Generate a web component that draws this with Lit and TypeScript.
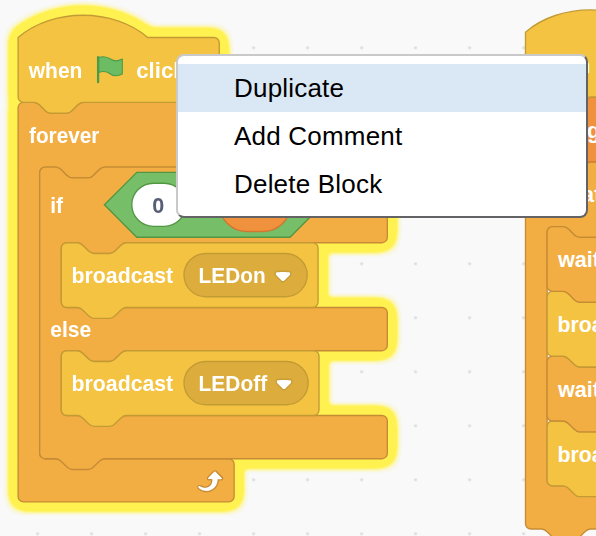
import { LitElement, html, svg, css } from "lit";
import { customElement, state } from "lit/decorators.js";
import { classMap } from "lit/directives/class-map.js";

const UNIT = 1.35;

// Connector traced left-to-right and right-to-left, 36 units wide and 8 deep.
const NOTCH = "c2,0 3,1 4,2 l4,4 c1,1 2,2 4,2 h12 c2,0 3,-1 4,-2 l4,-4 c1,-1 2,-2 4,-2";
const NOTCH_BACK = "c-2,0 -3,1 -4,2 l-4,4 c-1,1 -2,2 -4,2 h-12 c-2,0 -3,-1 -4,-2 l-4,-4 c-1,-1 -2,-2 -4,-2";

const footer = `H48 ${NOTCH_BACK} H4 a4,4 0 0 1 -4,-4 z`;
const header = (w: number, h: number) =>
  `M0,4 a4,4 0 0 1 4,-4 h8 ${NOTCH} H${w - 4} a4,4 0 0 1 4,4 v${h - 8} a4,4 0 0 1 -4,4`;
const mouth = (h: number) =>
  `H64 ${NOTCH_BACK} h-8 a4,4 0 0 0 -4,4 v${h - 8} a4,4 0 0 0 4,4`;
const arm = (w: number, h: number) => `H${w - 4} a4,4 0 0 1 4,4 v${h - 8} a4,4 0 0 1 -4,4`;

const hatPath = (w: number) =>
  `M0,0 c25,-22 71,-22 96,0 H${w - 4} a4,4 0 0 1 4,4 v40 a4,4 0 0 1 -4,4 ${footer}`;
const stackPath = (w: number) => `${header(w, 48)} ${footer}`;
const loopPath = (w: number, inner: number, armW: number, end: string) =>
  `${header(w, 48)} ${mouth(inner)} ${arm(armW, 32)} ${end}`;
const ifElsePath = (w: number) =>
  `${header(w, 56)} ${mouth(48)} ${arm(w, 32)} ${mouth(48)} ${arm(w, 32)} ${footer}`;

const shape = (kind: string, x: number, y: number, d: string) =>
  svg`<path class=${kind} transform="translate(${x} ${y}) scale(${UNIT})" d=${d}></path>`;

const label = (text: string, x: number, y: number, length: number) =>
  svg`<text class="label" x=${x} y=${y} textLength=${length} lengthAdjust="spacingAndGlyphs">${text}</text>`;

const caret = (x: number, y: number) => svg`
  <g transform="translate(${x} ${y}) scale(${UNIT})">
    <path class="caret-edge" d="M12.71,2.44A2.41,2.41,0,0,1,12,4.16L8.08,8.08a2.45,2.45,0,0,1-3.45,0L0.72,4.16A2.42,2.42,0,0,1,0,2.44,2.48,2.48,0,0,1,.71.71C1,0.47,1.43,0,6.36,0S11.75,0.46,12,.71A2.44,2.44,0,0,1,12.71,2.44Z"></path>
    <path class="white" d="M6.36,7.79a1.43,1.43,0,0,1-1-.42L1.42,3.45a1.44,1.44,0,0,1,0-2c0.56-.56,9.31-0.56,9.87,0a1.44,1.44,0,0,1,0,2L7.37,7.37A1.43,1.43,0,0,1,6.36,7.79Z"></path>
  </g>`;

const broadcast = (y: number, w: number, message: string, messageLength: number, fieldWidth: number, caretX: number) => svg`
  ${shape("event", 61.3, y, stackPath(w))}
  ${label("broadcast", 71.6, y + 40.6, 101.6)}
  <rect class="field" x="184" y=${y + 10.8} width=${fieldWidth} height="43.2" rx="21.6"></rect>
  ${label(message, 198.6, y + 40.6, messageLength)}
  ${caret(caretX, y + 27.9)}`;

@customElement("context-menu")
class ContextMenu extends LitElement {
  @state() private active = 0;

  private items = ["Duplicate", "Add Comment", "Delete Block"];

  static styles = css`
    :host {
      display: flex;
      flex-direction: column;
      box-sizing: border-box;
      padding: 8px 0;
      background: #fff;
      border: 2px solid;
      border-color: #c9c9c9 #636366 #636366 #c9c9c9;
      border-radius: 8px;
      font: 26px/48px "Liberation Sans", Arial, sans-serif;
      letter-spacing: 0.2px;
      color: #000;
    }
    .item {
      height: 48px;
      padding-left: 56px;
      white-space: nowrap;
      cursor: default;
    }
    .active {
      background: #dae7f4;
    }
  `;

  render() {
    return this.items.map(
      (item, i) => html`<div
        class=${classMap({ item: true, active: i === this.active })}
        @mouseenter=${() => (this.active = i)}
      >${item}</div>`
    );
  }
}

@customElement("app-root")
class AppRoot extends LitElement {
  static styles = css`
    :host {
      display: block;
      position: relative;
      width: 596px;
      height: 536px;
      overflow: hidden;
      background: #f9f9f9;
    }
    .canvas {
      display: block;
    }
    context-menu {
      position: absolute;
      left: 176px;
      top: 54px;
      width: 412px;
      height: 164px;
    }
    .dot { fill: #dadada; }
    .event { fill: #f4c342; stroke: #c39b35; }
    .control { fill: #f3ae43; stroke: #c68c35; }
    .data { fill: #f0913e; stroke: #cf7730; }
    .operator { fill: #77be68; stroke: #529643; }
    .field { fill: #dcad3c; stroke: #c39b35; stroke-width: 1.35px; }
    .slot { fill: #fff; stroke: #529643; stroke-width: 1.35px; }
    .pill, .hex { stroke-width: 1.35px; }
    .caret-edge { fill: #231f20; opacity: 0.1; }
    .white { fill: #fff; }
    .arrow-edge { fill: #c68c35; }
    .flag { fill: #6bbc63; stroke: #4f9a49; stroke-width: 1.1px; stroke-linejoin: round; }
    .pole { stroke: #4f9a49; stroke-width: 2.3px; stroke-linecap: round; }
    .label {
      font: bold 21.6px "Liberation Sans", Arial, sans-serif;
      fill: #fff;
    }
    .number {
      font: bold 21.6px "Liberation Sans", Arial, sans-serif;
      fill: #575e75;
    }
  `;

  private activeStack() {
    return svg`
      <g filter="url(#glow)">
        ${shape("control", 18.1, 102.3, loopPath(160, 216, 160, "H4 a4,4 0 0 1 -4,-4 z"))}
        ${shape("event", 18.1, 37.5, hatPath(149))}
        ${label("when", 28.8, 78, 53.6)}
        <path class="flag" d="M98.6 57.5C104 55.8 108 57.3 111 59.3C114 61.5 118 61.3 122.3 59.1V74C117.5 76.6 113.5 76.2 110 73.7C106.5 71.2 102.5 71 98.6 72.6Z"></path>
        <path class="pole" d="M98.1 57.2V82.2"></path>
        ${label("clicked", 136.3, 78, 75)}
        ${label("forever", 29, 143.2, 70.4)}
        ${shape("control", 39.7, 167.1, ifElsePath(257.5))}
        ${label("if", 50.2, 212.8, 12.8)}
        <path class="operator hex" d="M136.8 172.3H290L322.4 204.7L290 237.2H136.8L104.4 204.7Z"></path>
        <rect class="slot" x="131.8" y="183.2" width="54" height="43.2" rx="21.6"></rect>
        <text class="number" x="152.2" y="213">0</text>
        <rect class="data pill" x="219.5" y="177.5" width="71" height="54" rx="27"></rect>
        ${broadcast(242.7, 190.2, "LEDon", 67, 123.2, 274.4)}
        ${label("else", 50.2, 336.7, 41)}
        ${broadcast(350.7, 190.9, "LEDoff", 68.5, 124.2, 275.4)}
        <g transform="translate(191.7 464.4) scale(${UNIT})">
          <path class="arrow-edge" d="M23.3,11c-0.3,0.6-0.9,1-1.5,1h-1.6c-0.1,1.3-0.5,2.5-1.1,3.6c-0.9,1.7-2.3,3.2-4.1,4.1c-1.7,0.9-3.6,1.2-5.5,0.9c-1.8-0.3-3.5-1.1-4.9-2.3c-0.7-0.7-0.7-1.9,0-2.6c0.6-0.6,1.6-0.7,2.3-0.2H7c0.9,0.6,1.9,0.9,2.9,0.9s1.9-0.3,2.7-0.9c1.1-0.8,1.8-2.1,1.8-3.5h-1.5c-0.9,0-1.7-0.7-1.7-1.7c0-0.4,0.2-0.9,0.5-1.2l4.4-4.4c0.7-0.6,1.7-0.6,2.4,0L23,9.2C23.5,9.7,23.6,10.4,23.3,11z"></path>
          <path class="white" d="M21.8,11h-2.6c0,1.5-0.3,2.9-1,4.2c-0.8,1.6-2.1,2.8-3.7,3.6c-1.5,0.8-3.3,1.1-4.9,0.8c-1.6-0.2-3.2-1-4.4-2.1c-0.4-0.3-0.4-0.9-0.1-1.2c0.3-0.4,0.9-0.4,1.2-0.1l0,0c1,0.7,2.2,1.1,3.4,1.1s2.3-0.3,3.3-1c0.9-0.6,1.6-1.5,2-2.6c0.3-0.9,0.4-1.8,0.2-2.8h-2.4c-0.4,0-0.7-0.3-0.7-0.7c0-0.2,0.1-0.3,0.2-0.4l4.4-4.4c0.3-0.3,0.7-0.3,0.9,0L22,9.8c0.3,0.3,0.4,0.6,0.3,0.9S22,11,21.8,11z"></path>
        </g>
      </g>`;
  }

  private secondStack() {
    const x = 525.5;
    const inner = x + 21.6;
    return svg`
      ${shape("control", x, 161.8, loopPath(160, 192, 160, footer))}
      ${shape("data", x, 97, stackPath(160))}
      ${shape("event", x, 32.2, hatPath(160))}
      ${label("when", 536.4, 72.7, 54)}
      ${label("change", 536.4, 137.5, 76)}
      ${label("repeat", 536.4, 202, 65)}
      ${shape("event", inner, 421, stackPath(160))}
      ${shape("control", inner, 356.2, stackPath(160))}
      ${shape("event", inner, 291.4, stackPath(160))}
      ${shape("control", inner, 226.6, stackPath(160))}
      ${label("wait", 558, 267.1, 42)}
      ${label("broadcast", 557.6, 332, 101.6)}
      ${label("wait", 558, 396.9, 42)}
      ${label("broadcast", 557.6, 461.7, 101.6)}`;
  }

  render() {
    return html`
      <svg class="canvas" width="596" height="536" viewBox="0 0 596 536">
        <defs>
          <pattern id="grid" x="10.6" y="20.7" width="54" height="54" patternUnits="userSpaceOnUse">
            <circle class="dot" cx="27" cy="27" r="1.5"></circle>
          </pattern>
          <filter id="glow" filterUnits="userSpaceOnUse" x="-20" y="-10" width="440" height="550" color-interpolation-filters="sRGB">
            <feGaussianBlur in="SourceGraphic" stdDeviation="5.75"></feGaussianBlur>
            <feComponentTransfer result="halo">
              <feFuncA type="table" tableValues="0 1 1 1 1 1 1 1 1 1 1 1 1 1 1 1 1"></feFuncA>
            </feComponentTransfer>
            <feFlood flood-color="#fff250"></feFlood>
            <feComposite in2="halo" operator="in" result="tint"></feComposite>
            <feComposite in="SourceGraphic" in2="tint" operator="over"></feComposite>
          </filter>
        </defs>
        <rect width="596" height="536" fill="url(#grid)"></rect>
        ${this.secondStack()}
        ${this.activeStack()}
      </svg>
      <context-menu></context-menu>
    `;
  }
}
